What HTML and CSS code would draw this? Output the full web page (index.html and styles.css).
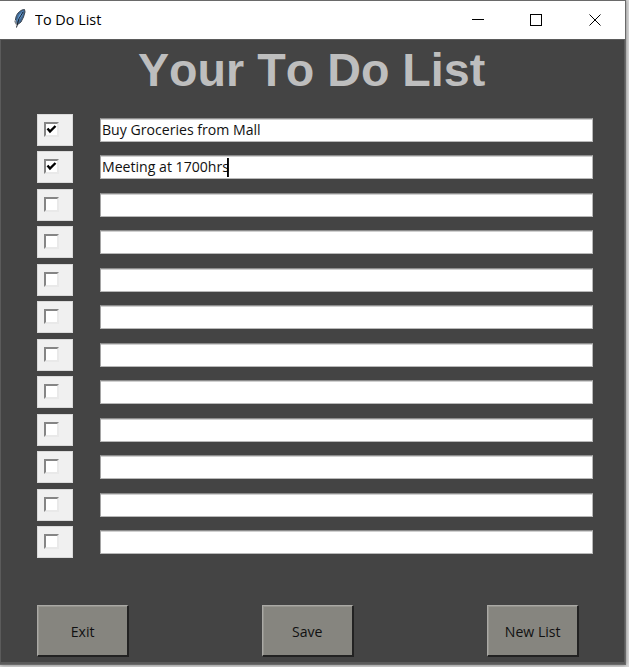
FILE: index.html
```html
<!DOCTYPE html>
<html lang="en">
<head>
<meta charset="utf-8">
<title>To Do List</title>
<link rel="stylesheet" href="styles.css">
</head>
<body>
<div class="window">
  <header class="titlebar">
    <svg class="feather" width="14" height="22" viewBox="0 0 14 22">
      <path d="M11.500 1.500C8 1.500 4 5 3 9L2 14L4 17L8 14L10.500 9L12 4Z" fill="#416a96" stroke="#3b4550" stroke-width="1"/>
      <path d="M10 3L6 7L4 13L7 11L9.500 7Z" fill="#69a1d8"/>
      <path d="M10 4Q5 10 3.500 19.500" fill="none" stroke="#18202a" stroke-width="1"/>
      <path d="M2.500 12L3.500 18" stroke="#a9a9a9" stroke-width="1"/>
    </svg>
    <span class="caption">To Do List</span>
    <svg class="controls" width="176" height="38" viewBox="0 0 176 38" fill="none" stroke="#000">
      <path d="M22 18.500H34M80.500 13.500H91.500V24.500H80.500Z" shape-rendering="crispEdges"/>
      <path d="M139.500 13.500L150.500 24.500M150.500 13.500L139.500 24.500"/>
    </svg>
  </header>
  <main class="client">
    <h1 class="heading">Your To Do List</h1>
    <div class="rows">
      <div class="row"><span class="cell"><span class="box"><svg width="11" height="11" viewBox="0 0 11 11"><path d="M1.500 4.500L4 7.500L9.500 2" class="tick"/></svg></span></span><span class="entry"><span class="text">Buy Groceries from Mall</span></span></div>
      <div class="row"><span class="cell"><span class="box"><svg width="11" height="11" viewBox="0 0 11 11"><path d="M1.500 4.500L4 7.500L9.500 2" class="tick"/></svg></span></span><span class="entry"><span class="text">Meeting at 1700hrs<i class="caret"></i></span></span></div>
      <div class="row"><span class="cell"><span class="box"></span></span><span class="entry"></span></div>
      <div class="row"><span class="cell"><span class="box"></span></span><span class="entry"></span></div>
      <div class="row"><span class="cell"><span class="box"></span></span><span class="entry"></span></div>
      <div class="row"><span class="cell"><span class="box"></span></span><span class="entry"></span></div>
      <div class="row"><span class="cell"><span class="box"></span></span><span class="entry"></span></div>
      <div class="row"><span class="cell"><span class="box"></span></span><span class="entry"></span></div>
      <div class="row"><span class="cell"><span class="box"></span></span><span class="entry"></span></div>
      <div class="row"><span class="cell"><span class="box"></span></span><span class="entry"></span></div>
      <div class="row"><span class="cell"><span class="box"></span></span><span class="entry"></span></div>
      <div class="row"><span class="cell"><span class="box"></span></span><span class="entry"></span></div>
    </div>
    <div class="actions">
      <button class="btn"><span>Exit</span></button>
      <button class="btn"><span>Save</span></button>
      <button class="btn"><span>New List</span></button>
    </div>
  </main>
</div>
</body>
</html>
```
FILE: styles.css
```css
* { box-sizing: border-box; }
body {
  margin: 0;
  height: 667px;
  overflow: hidden;
  background: #dcdcdc;
  font-family: "Open Sans", "Noto Sans", sans-serif;
  font-size: 15px;
  color: #111;
}
.window {
  width: 626px;
  height: 665px;
  border: solid #6a6a6a;
  border-width: 1px 1px 1px 0;
  background: #444;
  box-shadow: 0 0 4px #777;
}
.titlebar {
  display: flex;
  align-items: center;
  height: 38px;
  background: #fff;
}
.feather { margin-left: 13px; margin-top: -2px; }
.caption {
  margin: -2px 0 0 8px;
  color: #000;
  transform: scaleX(0.96);
  transform-origin: left;
}
.controls { margin-left: auto; margin-right: -1px; flex: none; }
.client {
  height: 625px;
  border: solid #5b5b5b;
  border-width: 1px 1px 2px 1px;
}
.heading {
  margin: 3px 0 0 137px;
  height: 54px;
  line-height: 54px;
  font-family: "Liberation Sans", Arial, sans-serif;
  font-size: 46.67px;
  font-kerning: none;
  white-space: nowrap;
  color: #bebebe;
}
.rows { display: grid; grid-auto-rows: 37.5px; margin: 16.5px 0 0 36px; }
.row { display: flex; align-items: flex-start; }
.cell {
  width: 36px;
  height: 32px;
  padding: 7px 0 0 6px;
  background: #f0f0f0;
  border: 1px solid #dadada;
}
.box {
  display: block;
  width: 15px;
  height: 15px;
  background: #fff;
  border: 2px solid;
  border-color: #858585 #e9e9e9 #e9e9e9 #858585;
}
.box svg { display: block; }
.tick { fill: none; stroke: #000; stroke-width: 2.4; }
.entry {
  width: 493px;
  height: 24px;
  margin: 4px 0 0 27px;
  padding-left: 1px;
  line-height: 20px;
  background: #fff;
  border: 1px solid;
  border-color: #8c8c8c #b8b8b8 #b8b8b8 #a5a5a5;
  box-shadow: inset 0 1px #d0d0d0;
  white-space: nowrap;
}
.text {
  display: inline-flex;
  transform: scaleX(0.94);
  transform-origin: left;
}
.caret { width: 2px; height: 19px; margin: 2px 0 0 -2px; background: #000; }
.actions { display: flex; gap: 133px; margin: 41.5px 0 0 36px; }
.btn {
  width: 92px;
  height: 52px;
  padding: 0;
  font: inherit;
  color: #111;
  background: #86857f;
  border: 2px solid;
  border-width: 1px 2px 2px 1px;
  border-color: #aaa9a5 #222 #222 #aaa9a5;
  border-radius: 0;
  box-shadow: inset 1px 1px #96958f;
}
.btn span { display: inline-block; transform: scaleX(0.94); }
```
